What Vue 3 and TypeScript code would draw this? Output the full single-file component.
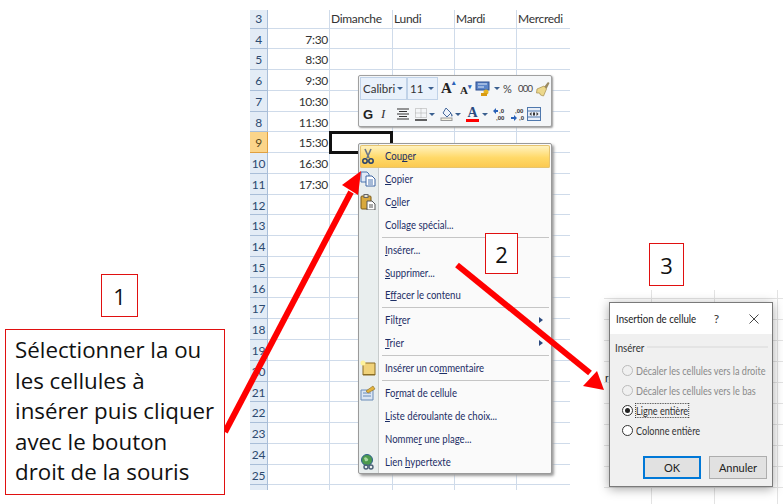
<script setup lang="ts">
const rows = Array.from({ length: 24 }, (_, i) => i + 3);
const times: Record<number, string> = { 4: '7:30', 5: '8:30', 6: '9:30', 7: '10:30', 8: '11:30', 9: '15:30', 10: '16:30', 11: '17:30' };
const heads = ['Dimanche', 'Lundi', 'Mardi', 'Mercredi'];
const colsBlank = [0, 1, 2, 3];
type Part = [string, string, string];
const groups: { label: Part; icon?: string; sub?: boolean; hot?: boolean }[][] = [
  [
    { label: ['Cou', 'p', 'er'], icon: 'cut', hot: true },
    { label: ['', 'C', 'opier'], icon: 'copy' },
    { label: ['C', 'o', 'ller'], icon: 'paste' },
    { label: ['Colla', 'g', 'e spécial...'] },
  ],
  [
    { label: ['', 'I', 'nsérer...'] },
    { label: ['', 'S', 'upprimer...'] },
    { label: ['E', 'f', 'facer le contenu'] },
  ],
  [
    { label: ['Filt', 'r', 'er'], sub: true },
    { label: ['', 'T', 'rier'], sub: true },
  ],
  [{ label: ['Insérer un co', 'm', 'mentaire'], icon: 'note' }],
  [
    { label: ['Fo', 'r', 'mat de cellule'], icon: 'format' },
    { label: ['', 'L', 'iste déroulante de choix...'] },
    { label: ['Nomme', 'r', ' une plage...'] },
    { label: ['Lien ', 'h', 'ypertexte'], icon: 'link' },
  ],
];
const radios = [
  { text: 'Décaler les cellules vers la droite', off: true },
  { text: 'Décaler les cellules vers le bas', off: true },
  { text: 'Ligne entière', on: true },
  { text: 'Colonne entière' },
];
const descLines = ['Sélectionner la ou', 'les cellules à', 'insérer puis cliquer', 'avec le bouton', 'droit de la souris'];
</script>

<template>
  <div class="page">
    <div class="sheet">
      <template v-for="r in rows" :key="r">
        <div class="rh" :class="{ sel: r === 9, top: r === 3 }"><span>{{ r < 26 ? r : '' }}</span></div>
        <div class="cell time">{{ times[r] }}</div>
        <div v-for="c in colsBlank" :key="c" class="cell" :class="{ head: r === 3, last: c === 3 }">{{ r === 3 ? heads[c] : '' }}</div>
      </template>
    </div>
    <div class="active"></div>

    <div class="mini">
      <div class="mrow r1">
        <span class="combo font">Calibri<i class="dd"></i></span>
        <span class="combo size">11<i class="dd"></i></span>
        <span class="ga">A<sup>▴</sup></span>
        <span class="pa">A<sup>▾</sup></span>
        <svg class="ic16 style" viewBox="0 0 16 16"><rect x="1" y="1" width="13" height="8" fill="#5b85c8" stroke="#2d4f8f"/><path d="M3 3h9M3 6h6" stroke="#dfe9f7"/><circle cx="11" cy="11" r="2.500" fill="#e6b422"/><rect x="6" y="12" width="6" height="3" fill="#d99b12"/></svg>
        <i class="dd after"></i>
        <span class="sym pct">%</span>
        <span class="sym zeros">000</span>
        <svg class="ic16 brush" viewBox="0 0 16 16"><path d="M10 6l4-5 1.500 1-3 6z" fill="#9a8a62"/><path d="M3 8l7-3 2.500 3-3 7-3-1-1-2-3 0z" fill="#ecd88c" stroke="#a58d4c" stroke-width=".7"/></svg>
      </div>
      <div class="mrow r2">
        <b class="g">G</b>
        <i class="it">I</i>
        <svg class="ic14 align" viewBox="0 0 14 14"><path d="M1 2h12M3 4.500h8M1 7h12M3 9.500h8M1 12h12" stroke="#333" stroke-width="1.200"/></svg>
        <svg class="ic14 border" viewBox="0 0 14 14"><path d="M1.500 1.500h11v9h-11zM7 1.500v9M1.500 6h11" fill="none" stroke="#aaa" stroke-dasharray="1 1"/><path d="M1 13h12" stroke="#222" stroke-width="1.400"/></svg>
        <i class="dd near"></i>
        <svg class="ic14 fill" viewBox="0 0 14 14"><path d="M6 1l5 5-4 4-4-4z" fill="#eef3fa" stroke="#46699c"/><path d="M11 6c2 2 2 3 1 3.500s-1-2-1-3.500z" fill="#46699c"/><rect x="1" y="11" width="11" height="2.500" fill="#f4f1df" stroke="#999"/></svg>
        <i class="dd near"></i>
        <span class="fa">A</span>
        <i class="dd after"></i>
        <svg class="ic14 dec1" viewBox="0 0 14 14"><path d="M0 4l3-3v2h2v2H3v2z" fill="#2a62b8"/><text x="6" y="6" class="tiny">,0</text><text x="3" y="13" class="tiny">,00</text></svg>
        <svg class="ic14 dec2" viewBox="0 0 14 14"><path d="M0 10h3V8l3 3-3 3v-2H0z" fill="#2a62b8"/><text x="4" y="6" class="tiny">,00</text><text x="8" y="13" class="tiny">,0</text></svg>
        <svg class="ic14 merge" viewBox="0 0 14 14"><rect x=".5" y=".5" width="13" height="13" fill="#e8eef7" stroke="#4f78ad"/><path d="M1 4h12M1 10h12" stroke="#4f78ad"/><path d="M2.500 7l2-2v4zM11.500 7l-2-2v4zM6 5.500h2v3H6z" fill="#333"/></svg>
      </div>
    </div>

    <div class="menu">
      <template v-for="(g, gi) in groups" :key="gi">
        <div v-if="gi" class="sep"></div>
        <div v-for="it in g" :key="it.label.join('')" class="item" :class="{ hot: it.hot }">
          <span class="gut">
            <svg v-if="it.icon === 'cut'" viewBox="0 0 16 16"><path d="M5 1l4 9M11 1L7 10" stroke="#6a778a" stroke-width="1.600"/><circle cx="5" cy="13" r="2.200" fill="none" stroke="#25406e" stroke-width="1.500"/><circle cx="11" cy="13" r="2.200" fill="none" stroke="#25406e" stroke-width="1.500"/></svg>
            <svg v-else-if="it.icon === 'copy'" viewBox="0 0 16 16"><path d="M1 1h6l2 2v8H1z" fill="#dfe9f7" stroke="#4a74b0"/><path d="M6 5h6l3 3v7H6z" fill="#fff" stroke="#3f66a3"/><path d="M8 9h5M8 11h5M8 13h5" stroke="#4a74b0"/></svg>
            <svg v-else-if="it.icon === 'paste'" viewBox="0 0 16 16"><rect x="1" y="2" width="10" height="13" rx="1" fill="#d9a93d" stroke="#7b5a19"/><rect x="4" y="0.500" width="4" height="3" fill="#e9e4d2" stroke="#666"/><path d="M7 7h5l3 3v6H7z" fill="#fff" stroke="#555"/><path d="M9 11h4M9 13h4" stroke="#555"/></svg>
            <svg v-else-if="it.icon === 'note'" viewBox="0 0 16 16"><path d="M3 3h12v12H3z" fill="#f0d27a" stroke="#8a6d24"/><path d="M3 14h12v1H3z" fill="#8a6d24"/><circle cx="3" cy="3" r="2.500" fill="#fdf29c"/></svg>
            <svg v-else-if="it.icon === 'format'" viewBox="0 0 16 16"><path d="M1 5h12v10H1z" fill="#dbe6f4" stroke="#6a8cb8"/><path d="M3 8h8M3 11h8" stroke="#6a8cb8"/><path d="M6 6l7-5 2 3-7 4z" fill="#e3b23c" stroke="#8a6d24" stroke-width=".6"/></svg>
            <svg v-else-if="it.icon === 'link'" viewBox="0 0 16 16"><circle cx="7" cy="6" r="5.500" fill="#4d9a4e" stroke="#2b5f8c"/><path d="M4 4c2-2 3 0 4 1s-1 3-3 2z" fill="#a8d8a0"/><circle cx="6" cy="13" r="2" fill="none" stroke="#4b6078" stroke-width="1.400"/><circle cx="11" cy="13" r="2" fill="none" stroke="#4b6078" stroke-width="1.400"/></svg>
          </span>
          <span class="lab">{{ it.label[0] }}<u>{{ it.label[1] }}</u>{{ it.label[2] }}</span>
          <i v-if="it.sub" class="sub"></i>
        </div>
      </template>
    </div>

    <svg class="arrows" viewBox="0 0 783 504" width="783" height="504">
      <path d="M225 432L351 192" stroke="#f00" stroke-width="6" fill="none"/>
      <path d="M361 171L342 185L358 195z" fill="#f00"/>
      <path d="M457 265L590 373" stroke="#f00" stroke-width="6" fill="none"/>
      <path d="M604 390L597 371L583 386z" fill="#f00"/>
    </svg>

    <div class="dlg-wrap">
      <div class="frag">ré</div>
      <div class="dlg">
        <div class="dlg-title">
          <span class="dlg-name"><span class="cond">Insertion de cellule</span></span>
          <span class="q">?</span>
          <svg class="x" viewBox="0 0 10 10"><path d="M.5 .5l9 9M9.500 .5l-9 9" stroke="#333" stroke-width=".9" fill="none"/></svg>
        </div>
        <div class="dlg-body">
          <div class="legend"><span class="cond leg">Insérer</span><i></i></div>
          <div v-for="r in radios" :key="r.text" class="radio" :class="{ off: r.off }">
            <span class="dot" :class="{ on: r.on }"></span>
            <span class="rtext" :class="{ focus: r.on }">{{ r.text }}</span>
          </div>
          <div class="btns">
            <span class="btn ok">OK</span>
            <span class="btn">Annuler</span>
          </div>
        </div>
      </div>
    </div>

    <div class="note n1">1</div>
    <div class="note n2">2</div>
    <div class="note n3">3</div>
    <div class="note desc"><div v-for="l in descLines" :key="l">{{ l }}</div></div>
  </div>
</template>

<style>
html, body { margin: 0; background: #fff; }
</style>

<style scoped>
.page { position: relative; width: 783px; height: 504px; overflow: hidden; background: #fff; font-family: "Open Sans", "Liberation Sans", sans-serif; }
.sheet { position: absolute; left: 250px; top: 10px; width: 320px; height: 480px; overflow: hidden; display: grid; grid-template-columns: 18px 62px 63px 62px 62px 53px; grid-template-rows: 18.500px; grid-auto-rows: 20.770px; font-size: 12px; letter-spacing: -.3px; color: #333; font-family: Lato, "Liberation Sans", sans-serif; }
.rh { background: #e3ecf6; border-bottom: 1px solid #a9bed8; border-right: 1px solid #a9bed8; color: #2c4a70; text-align: center; line-height: 21px; box-sizing: border-box; }
.rh.top { line-height: 17px; }
.rh.sel { background: #fbd58a; color: #5a4a20; border-color: #e0a040; }
.cell { border-right: 1px solid #cfdbea; border-bottom: 1px solid #cfdbea; box-sizing: border-box; line-height: 22px; white-space: nowrap; overflow: hidden; padding: 0 1px; }
.cell.last { border-right: 0; }
.time { text-align: right; padding-right: 1px; }
.head { padding-left: 1px; line-height: 17px; }
.active { position: absolute; left: 329px; top: 131px; width: 64px; height: 23px; border: 3px solid #111; box-sizing: border-box; }

.mini { position: absolute; left: 358px; top: 75px; width: 194px; height: 52px; box-sizing: border-box; background: #f4f6f8; border: 1px solid #a0a0a0; border-radius: 2px; box-shadow: 1px 1px 2px #999; padding: 1px 1px; display: flex; flex-direction: column; gap: 3px; }
.mrow { display: flex; align-items: center; height: 23px; color: #333; }
.mrow > * { flex: none; }
.combo { display: flex; align-items: center; justify-content: space-between; height: 23px; box-sizing: border-box; background: #e9f1fb; border: 1px solid #c0d2e8; font: 11.500px Lato, "Liberation Sans", sans-serif; padding: 0 3px 0 2px; }
.combo.font { width: 47px; }
.combo.size { width: 31px; }
.dd { display: inline-block; border: 3px solid transparent; border-top: 3px solid #3a5f8f; border-bottom-width: 0; }
.dd.after { margin-left: 3px; }
.dd.near { margin-left: 1px; }
.ga, .pa { font: bold 15px "Liberation Serif", serif; display: inline-flex; color: #222; }
.ga { margin-left: 3px; width: 16px; }
.pa { font-size: 11px; margin: 2px 0 0 3px; width: 14px; }
sup { font-size: 7px; color: #2a62b8; line-height: 1; }
.style { margin-left: 1px; }
.sym { font: 11px Lato, "Liberation Sans", sans-serif; color: #444; }
.pct { margin-left: 3px; width: 9px; }
.zeros { margin-left: 6px; font-size: 9.500px; letter-spacing: -.8px; width: 13px; }
.brush { margin-left: 3px; }
.ic16 { width: 16px; height: 16px; }
.ic14 { width: 14px; height: 14px; }
.tiny { font: bold 6px "Liberation Sans", sans-serif; fill: #333; }
.g { font: bold 13px "Liberation Sans", sans-serif; margin-left: 3px; width: 10px; color: #222; }
.it { font: italic 13px "Liberation Serif", serif; margin-left: 8px; width: 8px; color: #333; }
.align { margin-left: 7px; }
.border { margin-left: 4px; }
.fill { margin-left: 5px; }
.fa { font: bold 14px "Liberation Serif", serif; color: #2a4a80; border-bottom: 3px solid #f00; line-height: 13px; width: 13px; text-align: center; margin-left: 5px; }
.dec1 { margin-left: 5px; }
.dec2 { margin-left: 4px; }
.merge { margin-left: 2px; }

.menu { position: absolute; left: 358px; top: 143px; width: 194px; box-sizing: border-box; background: #fafafa; border: 1px solid #9a9a9a; border-radius: 2px; box-shadow: 2px 2px 3px #999; padding: 1px 1px 0; color: #1c2e66; font: 11px Lato, "Liberation Sans", sans-serif; background-image: linear-gradient(90deg, #e9eeee 0, #e9eeee 19px, #c8cccc 19px, #c8cccc 20px, transparent 20px); }
.item { display: flex; align-items: center; height: 22.800px; position: relative; }
.item.hot { background: linear-gradient(#fff4c6, #ffd968 55%, #fbc84f); box-shadow: inset 0 0 0 1px #e6c470; border-radius: 2px; }
.gut { width: 16px; height: 16px; flex: none; margin: 0 9px 0 0; display: flex; }
.gut svg { width: 16px; height: 16px; }
.lab { display: inline-block; white-space: nowrap; transform: scaleX(.87); transform-origin: left; margin-top: -1px; }
.sub { position: absolute; right: 7px; top: 8px; border: 3px solid transparent; border-left: 4px solid #2c4a80; border-right-width: 0; }
.sep { height: 1px; margin: .6px 1px .6px 22px; background: #c5c5c5; }

.dlg-wrap { position: absolute; left: 604px; top: 290px; width: 179px; height: 214px; background-color: #fff; background-image: linear-gradient(#e3e3e3 1px, transparent 1px), linear-gradient(90deg, #e3e3e3 1px, transparent 1px); background-size: 63px 21px; background-position: 47px 8px; }
.frag { position: absolute; left: 1px; top: 82px; font: 11px "Liberation Sans", sans-serif; color: #222; }
.dlg { position: absolute; left: 5px; top: 12px; width: 164px; height: 185px; box-sizing: border-box; border: 1px solid #7a7a7a; background: #f0f0f0; box-shadow: 0 2px 10px rgba(0, 0, 0, .35); display: flex; flex-direction: column; font: 11px Lato, "Liberation Sans", sans-serif; color: #333; }
.dlg-title { height: 31px; flex: none; background: #fff; display: flex; align-items: center; padding: 0 13px 0 6px; }
.dlg-name { flex: 1; color: #222; }
.cond { display: inline-block; transform: scaleX(.88); transform-origin: left; }
.rtext { display: inline-block; transform: scaleX(.83); transform-origin: left; }
.leg { width: 32px; }
.q { margin-right: 30px; font-size: 12px; }
.x { width: 10px; height: 10px; }
.dlg-body { padding: 5px 4px 0 5px; flex: 1; display: flex; flex-direction: column; }
.legend { display: flex; align-items: center; gap: 0; height: 16px; margin-bottom: 5px; }
.legend i { flex: 1; height: 2px; background: #e4e4e4; }
.radio { display: flex; align-items: center; gap: 3px; height: 20px; margin-left: 7px; white-space: nowrap; }
.radio.off { color: #8a8a8a; }
.dot { width: 9px; height: 9px; border: 1px solid #333; border-radius: 50%; background: #fff; flex: none; position: relative; }
.off .dot { border-color: #bbb; background: #f0f0f0; }
.dot.on::after { content: ""; position: absolute; inset: 2px; border-radius: 50%; background: #222; }
.rtext.focus { outline: 1px dotted #333; }
.btns { display: flex; justify-content: flex-end; gap: 8px; margin-top: 16px; padding-right: 1px; }
.btn { width: 58px; height: 23px; box-sizing: border-box; display: flex; align-items: center; justify-content: center; background: #e1e1e1; border: 1px solid #adadad; color: #222; }
.btn.ok { border: 2px solid #0078d7; }

.arrows { position: absolute; left: 0; top: 0; pointer-events: none; }
.note { position: absolute; box-sizing: border-box; background: #fff; border: 1px solid #e01010; color: #111; font-family: "Open Sans", "Liberation Sans", sans-serif; }
.n1, .n2, .n3 { display: flex; align-items: center; justify-content: center; font-size: 22px; }
.n1 { left: 101px; top: 274px; width: 37px; height: 43px; }
.n2 { left: 485px; top: 233px; width: 33px; height: 41px; }
.n3 { left: 649px; top: 243px; width: 35px; height: 43px; }
.desc { left: 5px; top: 329px; width: 220px; height: 166px; padding: 5px 0 3px 9px; font-size: 22.300px; line-height: 30.500px; white-space: nowrap; }
</style>
